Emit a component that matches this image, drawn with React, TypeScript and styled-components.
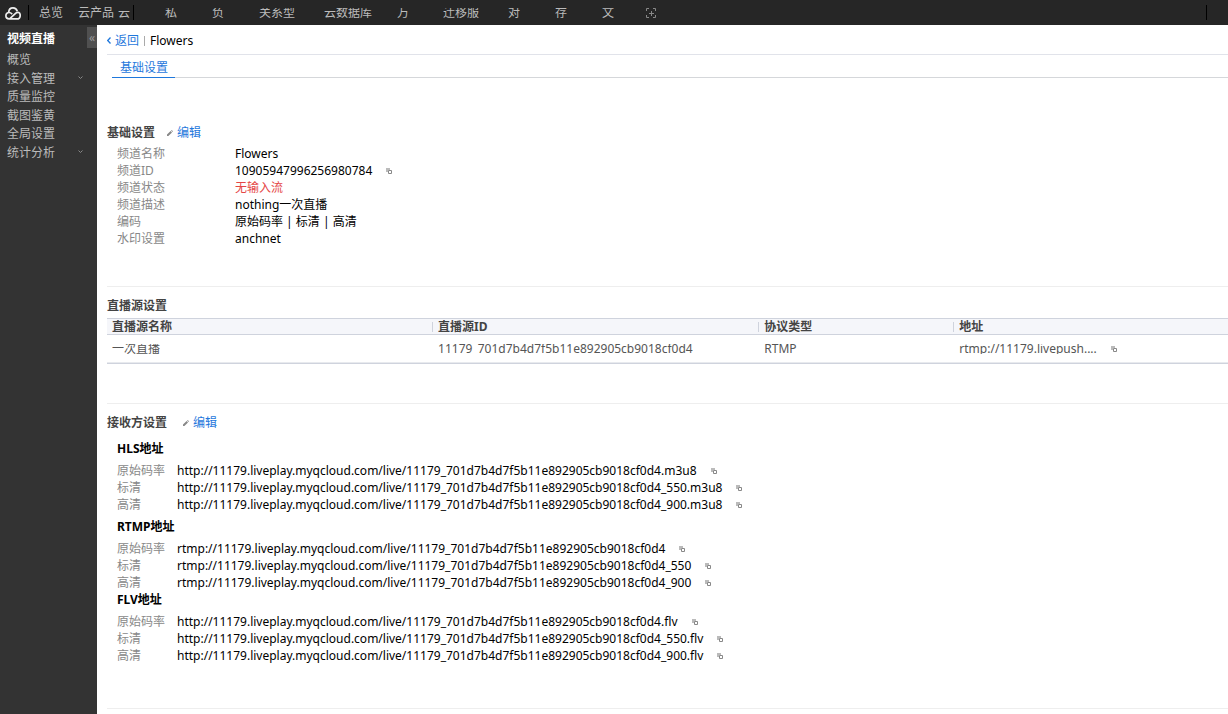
import React from "react";
import styled, { createGlobalStyle } from "styled-components";

const GlobalStyle = createGlobalStyle`
  *, *::before, *::after { box-sizing: border-box; }
  html, body { margin: 0; padding: 0; background: #fff; }
  body, button {
    font-family: "Noto Sans", "Noto Sans CJK SC", sans-serif;
    font-size: 12px;
    line-height: 17px;
  }
  body { color: #000; overflow-x: hidden; }
  ul, dl, dd, h1, h2, h3, p { margin: 0; padding: 0; font-size: 12px; }
  ul { list-style: none; }
  a { text-decoration: none; color: inherit; }
  button { border: 0; padding: 0; background: none; color: inherit; cursor: pointer; }
  svg { display: block; flex: none; }
`;

const Shell = styled.div`
  display: flex;
  flex-direction: column;
  min-height: 100vh;
`;

const TopBar = styled.header`
  display: flex;
  align-items: center;
  height: 25px;
  background: #262626;
  color: #bbb;
`;

const Logo = styled.a`
  display: flex;
  align-items: center;
  width: 28px;
  height: 25px;
  padding: 2px 0 0 5px;
`;

const Divider = styled.span`
  width: 1px;
  height: 15px;
  background: #000;
`;

const MainLinks = styled.nav`
  display: flex;
  align-items: center;
  gap: 15px;
  padding: 0 4px 1px 10px;
`;

const Overflow = styled.div`
  padding-right: 3px;
`;

const Shortcuts = styled.nav`
  display: flex;
  align-items: center;
  padding-left: 31px;
`;

const ClippedText = styled.span`
  display: flex;
  align-items: center;
  height: 10px;
  overflow: hidden;
  white-space: nowrap;
`;

const Shortcut = styled.a<{ $width: number }>`
  width: ${(p) => p.$width}px;
`;

const TopBarEnd = styled.div`
  margin-left: auto;
  padding-right: 21px;
`;

const Body = styled.div`
  display: flex;
  flex: 1;
`;

const Sidebar = styled.aside`
  flex: none;
  width: 97px;
  padding-top: 1px;
  background: #333;
  color: #bbb;
`;

const SidebarHead = styled.div`
  display: flex;
  justify-content: space-between;
  align-items: center;
  height: 25px;
  padding-left: 7px;
`;

const SidebarTitle = styled.h2`
  color: #fff;
`;

const Collapse = styled.button`
  align-self: flex-start;
  width: 10px;
  height: 21px;
  margin-top: 1px;
  background: #505050;
  color: #999;
  line-height: 19px;
`;

const Menu = styled.ul`
  display: grid;
  grid-auto-rows: 1fr;
  height: 111px;
`;

const MenuLink = styled.a`
  display: flex;
  align-items: center;
  justify-content: space-between;
  padding: 0 14px 0 7px;
`;

const Main = styled.main`
  flex: 1;
  min-width: 0;
  padding-left: 10px;
`;

const Crumbs = styled.div`
  display: flex;
  align-items: center;
  height: 30px;
  padding-top: 2px;
  border-bottom: 1px solid #e1e3ea;
`;

const BackLink = styled.a`
  display: flex;
  align-items: center;
  gap: 4px;
  padding-right: 5px;
  color: #1f78dc;
`;

const PageName = styled.h1`
  padding-left: 5px;
  border-left: 1px solid #aaa;
  line-height: 10px;
  font-weight: 400;
`;

const Tabs = styled.div`
  display: flex;
  height: 23px;
  margin-bottom: 46px;
  padding-left: 5px;
`;

const Tab = styled.button`
  padding: 2px 7px 0 8px;
  border-bottom: 1px solid #1f78dc;
  color: #1f78dc;
`;

const TabsRule = styled.div`
  flex: 1;
  border-bottom: 1px solid #d5d7da;
`;

const Section = styled.section<{ $space: number }>`
  padding-bottom: ${(p) => p.$space}px;
  margin-bottom: 10px;
  border-bottom: 1px solid #eee;
`;

const SectionHead = styled.div<{ $below: number; $gap: number }>`
  display: flex;
  align-items: center;
  gap: ${(p) => p.$gap}px;
  margin-bottom: ${(p) => p.$below}px;
`;

const SectionTitle = styled.h2`
  color: #444;
  font-weight: 700;
`;

const EditButton = styled.button`
  display: flex;
  align-items: center;
  gap: 4px;
  color: #1f78dc;
`;

const Fields = styled.dl`
  padding-left: 10px;
`;

const Field = styled.div<{ $label: number }>`
  display: grid;
  grid-template-columns: ${(p) => p.$label}px 1fr;
  height: 17px;
`;

const FieldName = styled.dt`
  color: #888;
`;

const FieldValue = styled.dd<{ $alert?: boolean }>`
  display: flex;
  align-items: center;
  gap: 14px;
  white-space: nowrap;
  color: ${(p) => (p.$alert ? "#e54545" : "#000")};
`;

const GroupTitle = styled.h3`
  margin-bottom: 5px;
  padding-left: 10px;
`;

const Group = styled.div<{ $gap: number }>`
  margin-bottom: ${(p) => p.$gap}px;
`;

const Table = styled.table`
  width: 100%;
  table-layout: fixed;
  border-collapse: separate;
  border-spacing: 0;
  border-top: 1px solid #cfd3dd;
  border-bottom: 1px solid #cfd3dd;
  color: #555;
`;

const HeadCell = styled.th<{ $width: string }>`
  width: ${(p) => p.$width};
  height: 16px;
  padding: 0;
  border-bottom: 1px solid #cfd3dd;
  background: #f5f6fa;
  color: #444;
  text-align: left;
  line-height: 10px;
`;

const HeadLabel = styled.span<{ $ruled: boolean }>`
  display: block;
  height: 10px;
  padding-left: 5px;
  border-left: ${(p) => (p.$ruled ? "1px solid #cfd3dd" : "0")};
`;

const Cell = styled.td<{ $ruled: boolean }>`
  height: 28px;
  padding: 0 0 0 ${(p) => (p.$ruled ? 6 : 5)}px;
  border-bottom: 1px solid #e8eaee;
`;

const CellContent = styled.div`
  display: flex;
  align-items: center;
  gap: 14px;
`;

const CopyButton = styled.button`
  display: flex;
  padding-top: 1px;
`;

const CopyIcon = () => (
  <CopyButton aria-label="复制">
    <svg width="6" height="6" viewBox="0 0 6 6" fill="none">
      <path d="M0 0h4v2H2v2H0z" fill="#bbb" />
      <path d="M2.5 2.5h3v3h-3z" stroke="#888" />
    </svg>
  </CopyButton>
);

const Edit = () => (
  <EditButton>
    <svg width="6" height="6" viewBox="0 0 6 6">
      <path d="M0 6V4.6L3.6 1 5 2.4 1.4 6zM4.1.6 4.7 0 6 1.3l-.6.6z" fill="#888" />
    </svg>
    编辑
  </EditButton>
);

const shortcuts = [
  { text: "私", width: 47 },
  { text: "负", width: 47 },
  { text: "关系型", width: 65 },
  { text: "云数据库", width: 73 },
  { text: "万", width: 46 },
  { text: "迁移服", width: 65 },
  { text: "对", width: 47 },
  { text: "存", width: 47 },
  { text: "文", width: 43 },
];

const menu = [
  { text: "概览" },
  { text: "接入管理", open: true },
  { text: "质量监控" },
  { text: "截图鉴黄" },
  { text: "全局设置" },
  { text: "统计分析", open: true },
];

const fields = [
  { name: "频道名称", value: "Flowers" },
  { name: "频道ID", value: "10905947996256980784", copy: true },
  { name: "频道状态", value: "无输入流", alert: true },
  { name: "频道描述", value: "nothing一次直播" },
  { name: "编码", value: "原始码率 | 标清 | 高清" },
  { name: "水印设置", value: "anchnet" },
];

const columns = [
  { title: "直播源名称", width: "29%", value: "一次直播" },
  { title: "直播源ID", width: "29.1%", value: "11179_701d7b4d7f5b11e892905cb9018cf0d4" },
  { title: "协议类型", width: "17.4%", value: "RTMP" },
  { title: "地址", width: "auto", value: "rtmp://11179.livepush....", copy: true },
];

const stream = "://11179.liveplay.myqcloud.com/live/11179_701d7b4d7f5b11e892905cb9018cf0d4";
const groups = [
  { title: "HLS地址", scheme: "http", ext: ".m3u8", gap: 5 },
  { title: "RTMP地址", scheme: "rtmp", ext: "", gap: 0 },
  { title: "FLV地址", scheme: "http", ext: ".flv", gap: 0 },
];
const qualities = [
  { name: "原始码率", suffix: "" },
  { name: "标清", suffix: "_550" },
  { name: "高清", suffix: "_900" },
];

export default function App() {
  return (
    <Shell>
      <GlobalStyle />
      <TopBar>
        <Logo href="#" aria-label="首页">
          <svg width="16" height="13" viewBox="0 0 16 13" fill="none" stroke="#eee" strokeWidth="1.7">
            <path d="M4.6 11.9 10.8 6.2c2-1.8 4.4-.6 4.4 2 0 2-1.3 3.7-3.3 3.7H4.2C2.2 11.9.9 10.5.9 8.7.9 6.9 2.3 5.5 4 5.5c1.3 0 2.2.6 3.2 1.6" />
            <path d="M3.7 5.4C3.8 2.7 5.6.9 8 .9c2 0 3.6 1.1 4.3 3.4" />
          </svg>
        </Logo>
        <Divider />
        <MainLinks>
          <a href="#">总览</a>
          <a href="#">云产品</a>
        </MainLinks>
        <Overflow>
          <ClippedText>云</ClippedText>
        </Overflow>
        <Divider />
        <Shortcuts>
          {shortcuts.map((s) => (
            <Shortcut key={s.text} href="#" $width={s.width}>
              <ClippedText>{s.text}</ClippedText>
            </Shortcut>
          ))}
          <button aria-label="添加">
            <svg width="12" height="12" viewBox="0 0 12 12" fill="none" stroke="#888">
              <path d="M1.5 4V1.5H4M8 1.5h2.5V4M10.5 8v2.5H8M4 10.5H1.5V8M4 6.5h5M6.5 4v5" />
            </svg>
          </button>
        </Shortcuts>
        <TopBarEnd>
          <Divider as="div" />
        </TopBarEnd>
      </TopBar>
      <Body>
        <Sidebar>
          <SidebarHead>
            <SidebarTitle>视频直播</SidebarTitle>
            <Collapse aria-label="收起">«</Collapse>
          </SidebarHead>
          <Menu>
            {menu.map((m) => (
              <li key={m.text}>
                <MenuLink href="#">
                  {m.text}
                  {m.open && (
                    <svg width="5" height="4" viewBox="0 0 5 4" fill="none" stroke="#888">
                      <path d="M.5.5 2.5 2.5 4.5.5" />
                    </svg>
                  )}
                </MenuLink>
              </li>
            ))}
          </Menu>
        </Sidebar>
        <Main>
          <Crumbs>
            <BackLink href="#">
              <svg width="4" height="7" viewBox="0 0 4 7" fill="none" stroke="#1f78dc" strokeWidth="1.3">
                <path d="M3.5.5.7 3.5l2.8 3" />
              </svg>
              返回
            </BackLink>
            <PageName>Flowers</PageName>
          </Crumbs>
          <Tabs>
            <Tab>基础设置</Tab>
            <TabsRule />
          </Tabs>

          <Section $space={39}>
            <SectionHead $below={4} $gap={12}>
              <SectionTitle>基础设置</SectionTitle>
              <Edit />
            </SectionHead>
            <Fields>
              {fields.map((f) => (
                <Field key={f.name} $label={118}>
                  <FieldName>{f.name}</FieldName>
                  <FieldValue $alert={f.alert}>
                    {f.value}
                    {f.copy && <CopyIcon />}
                  </FieldValue>
                </Field>
              ))}
            </Fields>
          </Section>

          <Section $space={39}>
            <SectionHead $below={4} $gap={12}>
              <SectionTitle>直播源设置</SectionTitle>
            </SectionHead>
            <Table>
              <thead>
                <tr>
                  {columns.map((c, i) => (
                    <HeadCell key={c.title} $width={c.width}>
                      <HeadLabel $ruled={i > 0}>{c.title}</HeadLabel>
                    </HeadCell>
                  ))}
                </tr>
              </thead>
              <tbody>
                <tr>
                  {columns.map((c, i) => (
                    <Cell key={c.title} $ruled={i > 0}>
                      <CellContent>
                        <ClippedText>{c.value}</ClippedText>
                        {c.copy && <CopyIcon />}
                      </CellContent>
                    </Cell>
                  ))}
                </tr>
              </tbody>
            </Table>
          </Section>

          <Section $space={44}>
            <SectionHead $below={9} $gap={16}>
              <SectionTitle>接收方设置</SectionTitle>
              <Edit />
            </SectionHead>
            {groups.map((g) => (
              <Group key={g.title} $gap={g.gap}>
                <GroupTitle>{g.title}</GroupTitle>
                <Fields>
                  {qualities.map((q) => (
                    <Field key={q.name} $label={60}>
                      <FieldName>{q.name}</FieldName>
                      <FieldValue>
                        {g.scheme + stream + q.suffix + g.ext}
                        <CopyIcon />
                      </FieldValue>
                    </Field>
                  ))}
                </Fields>
              </Group>
            ))}
          </Section>
        </Main>
      </Body>
    </Shell>
  );
}
